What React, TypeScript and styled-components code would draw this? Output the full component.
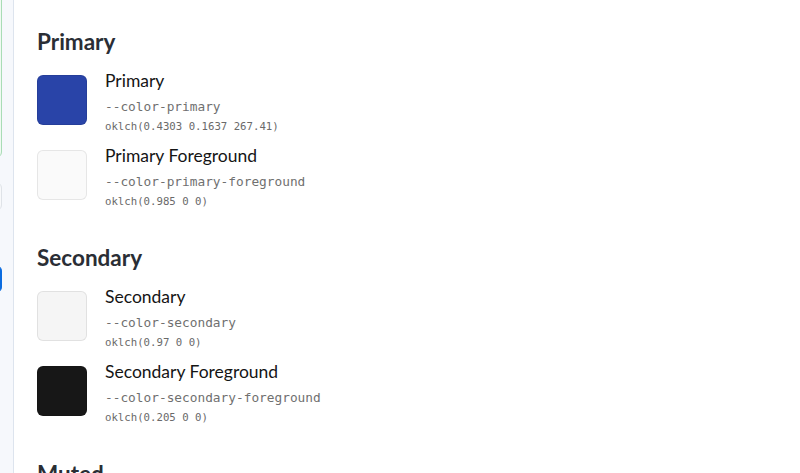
import React from 'react';
import styled, { createGlobalStyle } from 'styled-components';

const GlobalStyle = createGlobalStyle`
  html, body {
    margin: 0;
    padding: 0;
    background: #ffffff;
    overflow: hidden;
  }
  body {
    font-family: Lato, "Noto Sans", sans-serif;
  }
`;

const Shell = styled.div`
  display: flex;
  width: 800px;
  height: 473px;
  overflow: hidden;
`;

const Sidebar = styled.aside`
  flex: 0 0 14px;
  display: flex;
  flex-direction: column;
  align-items: flex-end;
  padding-right: 11px;
  box-sizing: border-box;
  width: 14px;
  overflow: hidden;
  background: #f6f8fc;
  border-right: 1px solid #dde4ee;
`;

const SideCard = styled.div<{ $tone: 'green' | 'grey' | 'blue'; $h: number; $mt: number }>`
  flex: 0 0 auto;
  width: 180px;
  height: ${p => p.$h}px;
  margin-top: ${p => p.$mt}px;
  border-radius: 6px;
  box-sizing: border-box;
  border: 1px solid
    ${p => (p.$tone === 'green' ? '#a9dcb6' : p.$tone === 'grey' ? '#dfe3e8' : '#0b6ce0')};
  background: ${p => (p.$tone === 'green' ? '#effaf2' : p.$tone === 'grey' ? '#f8f9fb' : '#0b6ce0')};
`;

const Main = styled.main`
  flex: 1;
  padding: 28px 0 0 23px;
  display: flex;
  flex-direction: column;
  gap: 37px;
`;

const Section = styled.section`
  display: flex;
  flex-direction: column;
`;

const SectionTitle = styled.h2`
  margin: 0 0 12px;
  font-size: 22.5px;
  line-height: 28px;
  font-weight: 700;
  color: #2a2e35;
`;

const Rows = styled.div`
  display: flex;
  flex-direction: column;
  gap: 11px;
`;

const Row = styled.div`
  display: flex;
  align-items: center;
  gap: 18px;
`;

const Swatch = styled.div<{ $color: string }>`
  flex: 0 0 50px;
  width: 50px;
  height: 50px;
  border-radius: 6px;
  box-sizing: border-box;
  background: ${p => p.$color};
  border: 1px solid rgba(0, 0, 0, 0.08);
`;

const Info = styled.div`
  display: flex;
  flex-direction: column;
  margin: 2px 0 -2px;
`;

const Name = styled.div`
  font-size: 17.5px;
  line-height: 22px;
  color: #151515;
`;

const VarName = styled.code`
  margin-top: 7px;
  font-family: "DejaVu Sans Mono", "Liberation Mono", monospace;
  font-size: 12.8px;
  line-height: 16px;
  color: #707070;
`;

const Value = styled.code`
  margin-top: 5px;
  font-family: "DejaVu Sans Mono", "Liberation Mono", monospace;
  font-size: 10.7px;
  line-height: 14px;
  color: #6a6a6a;
`;

type Token = { name: string; variable: string; value: string };

const sections: { title: string; tokens: Token[] }[] = [
  {
    title: 'Primary',
    tokens: [
      { name: 'Primary', variable: '--color-primary', value: 'oklch(0.4303 0.1637 267.41)' },
      { name: 'Primary Foreground', variable: '--color-primary-foreground', value: 'oklch(0.985 0 0)' },
    ],
  },
  {
    title: 'Secondary',
    tokens: [
      { name: 'Secondary', variable: '--color-secondary', value: 'oklch(0.97 0 0)' },
      { name: 'Secondary Foreground', variable: '--color-secondary-foreground', value: 'oklch(0.205 0 0)' },
    ],
  },
  {
    title: 'Muted',
    tokens: [
      { name: 'Muted', variable: '--color-muted', value: 'oklch(0.97 0 0)' },
      { name: 'Muted Foreground', variable: '--color-muted-foreground', value: 'oklch(0.556 0 0)' },
    ],
  },
];

export default function App() {
  return (
    <>
      <GlobalStyle />
      <Shell>
        <Sidebar>
          <SideCard $tone="green" $h={181} $mt={-23} />
          <SideCard $tone="grey" $h={29} $mt={24} />
          <SideCard $tone="blue" $h={28} $mt={54} />
        </Sidebar>
        <Main>
          {sections.map(s => (
            <Section key={s.title}>
              <SectionTitle>{s.title}</SectionTitle>
              <Rows>
                {s.tokens.map(t => (
                  <Row key={t.variable}>
                    <Swatch $color={t.value} />
                    <Info>
                      <Name>{t.name}</Name>
                      <VarName>{t.variable}</VarName>
                      <Value>{t.value}</Value>
                    </Info>
                  </Row>
                ))}
              </Rows>
            </Section>
          ))}
        </Main>
      </Shell>
    </>
  );
}
